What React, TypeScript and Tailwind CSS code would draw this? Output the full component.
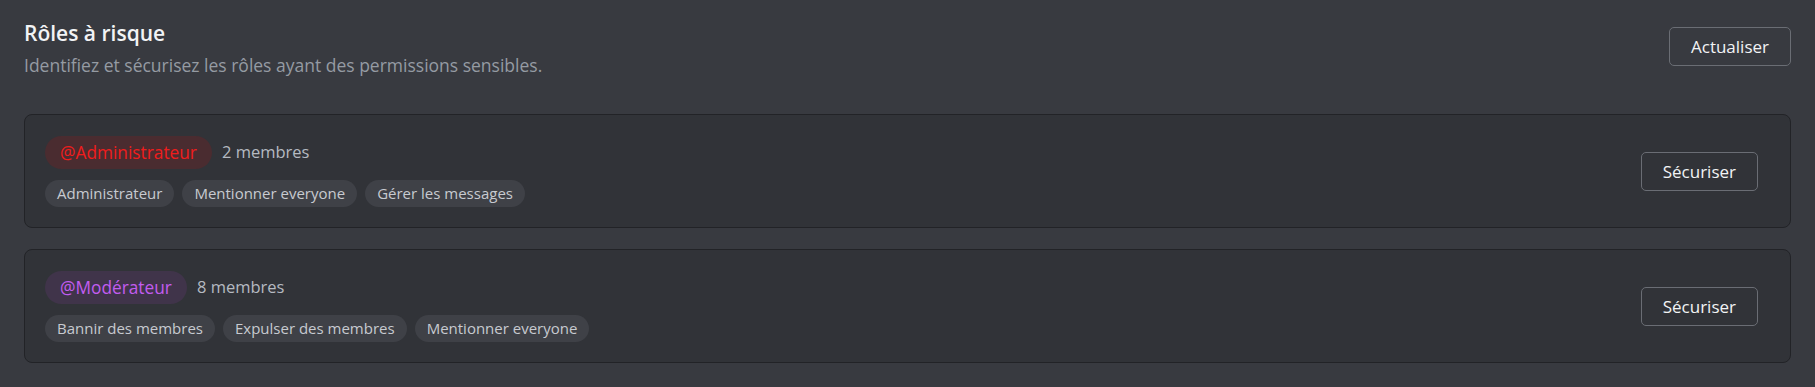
import React from 'react'

type Role = {
  id: string
  name: string
  members: number
  badge: string
  perms: string[]
}

const roles: Role[] = [
  {
    id: 'admin',
    name: '@Administrateur',
    members: 2,
    badge: 'bg-[#4a2c30] text-[#f01c1c]',
    perms: ['Administrateur', 'Mentionner everyone', 'Gérer les messages'],
  },
  {
    id: 'mod',
    name: '@Modérateur',
    members: 8,
    badge: 'bg-[#40344a] text-[#c25cf0]',
    perms: ['Bannir des membres', 'Expulser des membres', 'Mentionner everyone'],
  },
]

export default function App() {
  return (
    <div className="min-h-screen bg-[#383a40] px-6 pt-[19px] font-['Open_Sans',sans-serif]">
      {/* Header */}
      <div className="flex items-start justify-between">
        <div>
          <h2 className="text-[21px] leading-[28px] font-semibold text-[#f2f3f5]">Rôles à risque</h2>
          <p className="mt-[6px] text-[17.5px] leading-[24px] text-[#959ba3]">
            Identifiez et sécurisez les rôles ayant des permissions sensibles.
          </p>
        </div>
        <button className="mt-2 h-[39px] px-[21px] rounded-[5px] border border-[#6a6d74] text-[17px] text-[#f2f3f5]">
          Actualiser
        </button>
      </div>

      {/* Roles */}
      <div className="mt-[37px] flex flex-col gap-[21px]">
        {roles.map((r) => (
          <div
            key={r.id}
            className="flex items-center justify-between rounded-[8px] border border-[#222327] bg-[#313338] pl-5 pr-8 pt-[21px] pb-5"
          >
            <div>
              <div className="flex items-center">
                <span className={`inline-flex h-[33px] items-center rounded-full px-[15px] text-[17.3px] ${r.badge}`}>
                  {r.name}
                </span>
                <span className="ml-[10px] text-[16.5px] text-[#b5bac1]">{r.members} membres</span>
              </div>
              <div className="mt-[11px] flex gap-2">
                {r.perms.map((p) => (
                  <span
                    key={p}
                    className="inline-flex h-[27px] items-center rounded-full bg-[#3f4147] px-3 text-[15px] text-[#c7cad0]"
                  >
                    {p}
                  </span>
                ))}
              </div>
            </div>
            <button className="h-[39px] px-[21px] rounded-[5px] border border-[#6a6d74] text-[17px] text-[#f2f3f5]">
              Sécuriser
            </button>
          </div>
        ))}
      </div>
    </div>
  )
}
